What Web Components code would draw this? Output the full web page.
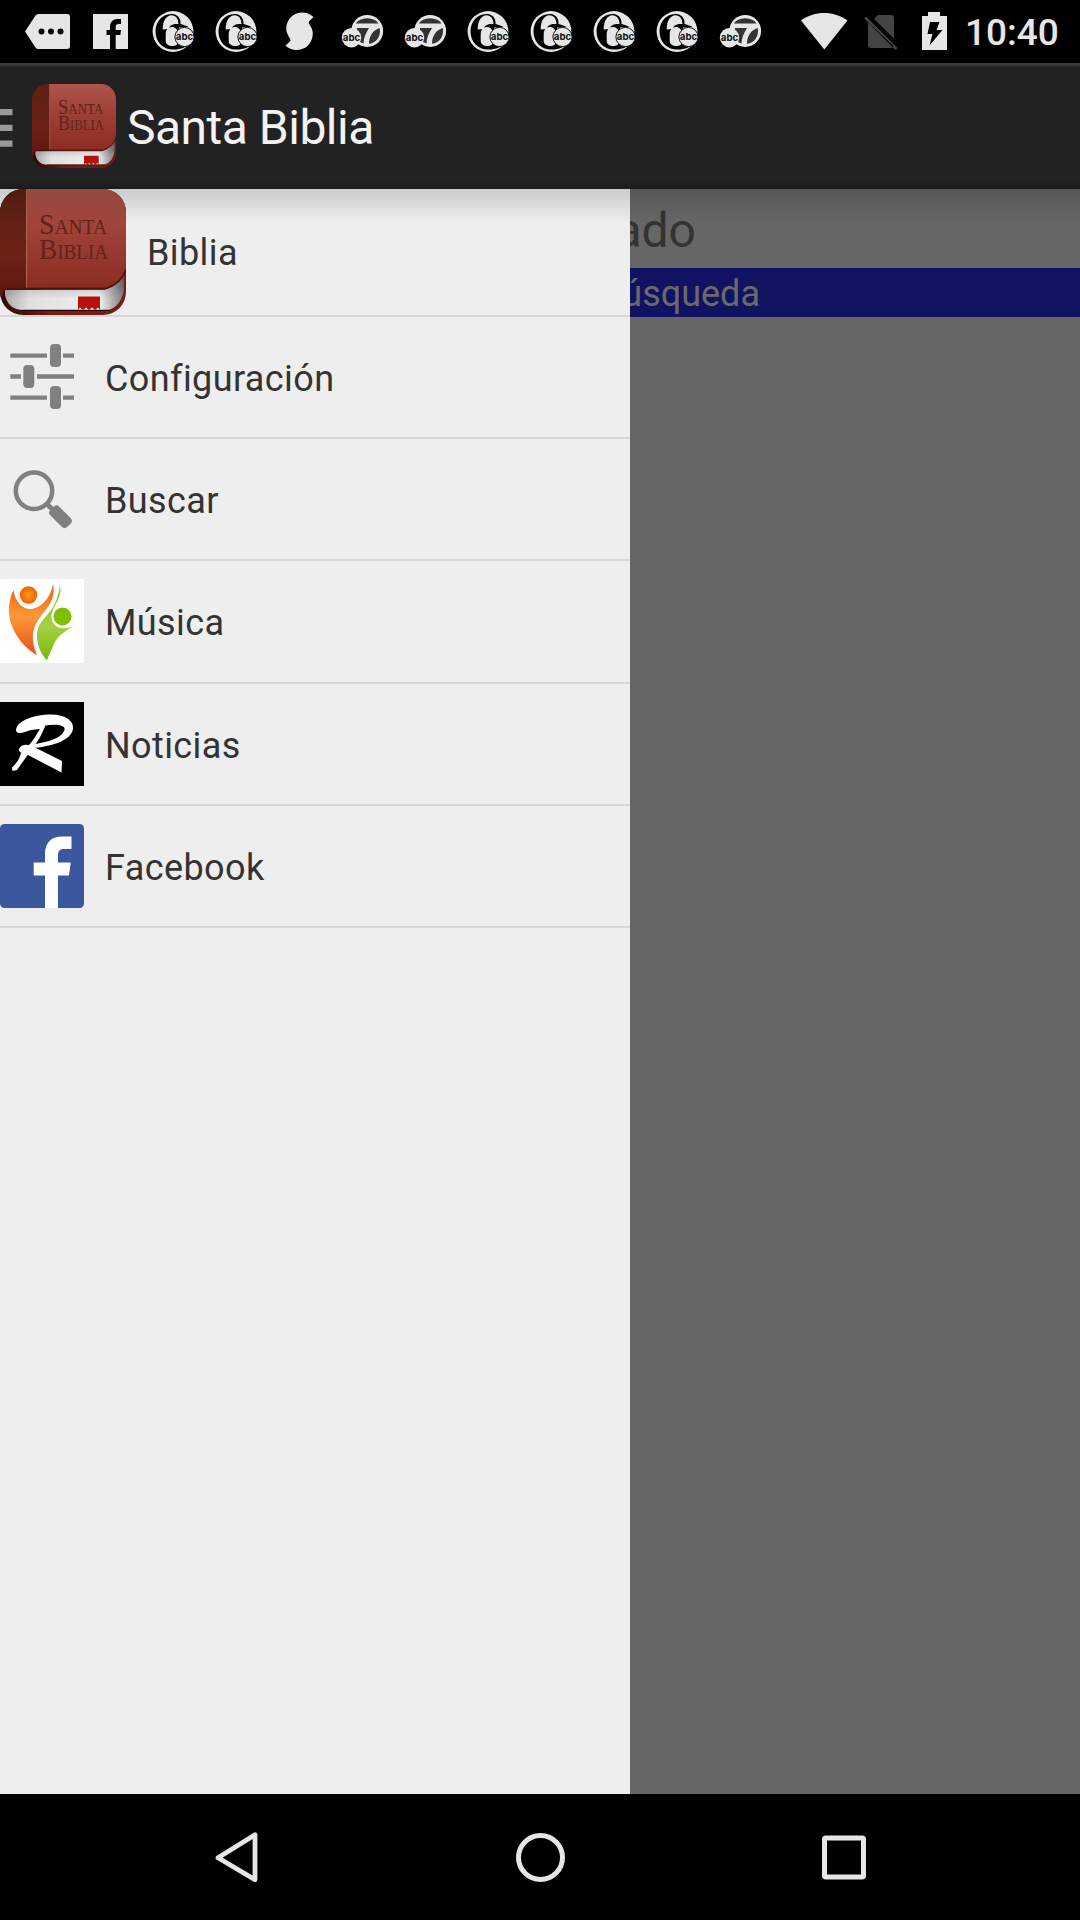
<!DOCTYPE html>
<html lang="es">
<head>
<meta charset="utf-8">
<title>Santa Biblia</title>
<style>
html,body{margin:0;width:1080px;height:1920px;overflow:hidden;background:#000;font-family:Roboto,"Noto Sans",sans-serif}
</style>
</head>
<body>
<bible-app></bible-app>
<script>
const define = (name, css, html) => customElements.define(name, class extends HTMLElement {
  constructor() {
    super();
    this.attachShadow({mode: 'open'}).innerHTML = `<style>${css}</style>${typeof html === 'function' ? html(this) : html}`;
  }
});

const ICONS = {
  message: [63, 63, `<path fill="#e6e6e6" d="M9 31.5 19.500 15.500Q20.500 14 22.500 14H51Q54 14 54 17V46Q54 49 51 49H22.500Q20.500 49 19.500 47.500Z"/><g fill="#000"><circle cx="25.500" cy="31.500" r="3"/><circle cx="35" cy="31.500" r="3"/><circle cx="44.500" cy="31.500" r="3"/></g>`],
  fbsmall: [63, 63, `<path fill="#e6e6e6" d="M14 14H49V49H14Z"/><path fill="#000" d="M31 49V35H27.500V30H31V27C31 22 34 19 38.500 19H42V24H39.500C37.500 24 36.700 25 36.700 27V30H42L41.300 35H36.700V49Z"/>`],
  six: [63, 63, `<circle cx="31" cy="31.500" r="20.400" fill="#e6e6e6"/><path fill="#000" d="M31 14C20 13 13.500 22 13.500 31.500C13.500 42 21 49.500 31 49.500C40 49.500 44 47 46 44L38 43L37 27.500L46.500 27C44 25.500 41 24.500 38.500 24C39 20 37 15 31 14Z"/><path fill="#e6e6e6" d="M20.700 29.500C20.700 21 24 15.500 29.500 15.200C34 15.200 36.500 19 36.500 24C31 23.500 27.500 25.500 26.500 29Z"/><path fill="#e6e6e6" d="M23.700 34C23.700 29.500 26.500 26.500 30.500 27C34 27.500 36 30 36 34V42C36 47.500 23.700 47.500 23.700 41Z"/><circle cx="42.500" cy="37" r="9.600" fill="#e6e6e6" stroke="#111" stroke-width="1"/><text x="33.800" y="40.300" textLength="17.400" lengthAdjust="spacingAndGlyphs" font-family="Inter,sans-serif" font-weight="700" font-size="9.500" fill="#111">abc</text>`],
  swirl: [63, 63, `<path fill="#e6e6e6" d="M45.500 17C39 11.500 31 11.500 25.500 15C18 20 17 29 19.500 34C21 38 23 39 22.500 41L17.500 45.500C23 51.500 33 51 39 46.500C45 41 46 33 43.500 28C42 24.500 40 23.500 41 21.500Z"/>`],
  seven: [63, 63, `<circle cx="36.200" cy="31" r="15.900" fill="#e6e6e6"/><path fill="#333" d="M24.800 23.500Q28 18.500 36.200 18.300Q44.500 18.500 47.500 23.500ZM26 28H38C35 33 32.500 38 32.500 43.500L29 42Q25 36 26 28ZM48.800 28C42 30 38 36 38 43.800C46 43 50 36 48.800 28Z"/><circle cx="20.500" cy="37.700" r="9.700" fill="#e6e6e6"/><text x="11.800" y="41" textLength="17.400" lengthAdjust="spacingAndGlyphs" font-family="Inter,sans-serif" font-weight="700" font-size="9.500" fill="#111">abc</text>`],
  wifi: [48, 63, `<path fill="#e6e6e6" d="M1 20.500C14 10.500 34 10.500 47.500 20.500L24.300 49.500Z"/>`],
  nosim: [36, 63, `<path fill="#444" d="M11 19 15 15H28Q31 15 31 18V38.500ZM5 22V45Q5 48 8 48H28Q30 48 30.500 46ZM1.200 18.500 3 16.500 34.500 48 32.500 50Z"/>`],
  battery: [26, 63, `<path fill="#e6e6e6" d="M0 16H6V12H18V16H25V50H0Z"/><path fill="#000" d="M8 22H17.500L14.500 30H20.500L7.500 45.500 10.500 34H5.500Z"/>`],
  menu: [13, 38, `<path fill="#999" d="M0 0H12.500V6.300H0ZM0 15.800H12.500V22.100H0ZM0 31.500H12.500V37.800H0Z"/>`],
  book: [126, 126, `<defs><linearGradient id="c" x1="0" y1="0" x2="0" y2="1"><stop offset="0" stop-color="#ae564c"/><stop offset=".3" stop-color="#a2463b"/><stop offset="1" stop-color="#8c2c22"/></linearGradient><linearGradient id="s" x1="0" y1="0" x2="0" y2="1"><stop offset="0" stop-color="#5c2015"/><stop offset=".6" stop-color="#6e2114"/><stop offset="1" stop-color="#5c170e"/></linearGradient><linearGradient id="p"><stop offset="0" stop-color="#aaa"/><stop offset=".2" stop-color="#e0e0e0"/><stop offset=".8" stop-color="#efefef"/><stop offset="1" stop-color="#777"/></linearGradient><linearGradient id="b"><stop offset="0" stop-color="#2b0805"/><stop offset=".4" stop-color="#7c1a12"/><stop offset="1" stop-color="#751c14"/></linearGradient><linearGradient id="h" x1="0" y1="0" x2="0" y2="1"><stop offset="0" stop-color="#000" stop-opacity=".3"/><stop offset="1" stop-color="#000" stop-opacity="0"/></linearGradient><clipPath id="k"><rect width="126" height="126" rx="23"/></clipPath></defs>
  <g clip-path="url(#k)"><path fill="url(#b)" d="M0 0H126V126H0Z"/><path fill="url(#p)" d="M5 101H105Q118 97 124 84V100Q122 116 109 121H22Q8 120 5 106Z"/><path fill="url(#h)" d="M5 101H105Q118 97 124 84V100Q118 108 108 110H6Z"/><path d="M22 121.300H110" stroke="#210806" stroke-width="1.200"/><path fill="url(#c)" d="M26 0H126V80Q122 94 107 99H26Z"/><path fill="url(#s)" d="M0 0H26V99H7Q2 101 2 110H0Z"/><path stroke="#b16455" stroke-width="1" d="M26.500 0V99"/><path d="M5 100Q8 99 107 99Q122 94 126 80" fill="none" stroke="#4a130d" stroke-width="1.500"/><path fill="#b5120c" d="M78 107.500H100V121L98 118.500 95 121 92 118.500 89 121 86 118.500 83 121 80 118.500 78 121Z"/></g>
  <g font-family="Liberation Serif,serif" fill="#63211a"><text x="39" y="45" font-size="30" textLength="68" lengthAdjust="spacingAndGlyphs" font-variant="small-caps">Santa</text><text x="39" y="69.500" font-size="30" textLength="69" lengthAdjust="spacingAndGlyphs" font-variant="small-caps">Biblia</text></g>`],
  sliders: [84, 84, `<path stroke="#808080" stroke-width="4.300" d="M10.300 20.600H47M63 20.600H74M10.300 41.500H21M37 41.500H74M10.300 62.700H47M63 62.700H74"/><g fill="#808080"><rect x="50" y="9" width="11" height="23" rx="4"/><rect x="23.300" y="30" width="11" height="23" rx="4"/><rect x="50" y="51" width="11" height="23" rx="4"/></g>`],
  search: [84, 84, `<circle cx="34" cy="33.700" r="18.200" fill="none" stroke="#808080" stroke-width="4.500"/><path stroke="#808080" stroke-width="5" d="M46.500 46.500 54 54"/><rect x="48.500" y="53.500" width="24" height="12.500" rx="4" transform="rotate(45 60.500 59.750)" fill="#808080"/>`],
  music: [84, 84, `<defs><radialGradient id="o"><stop offset="0" stop-color="#ff9c1a"/><stop offset="1" stop-color="#f2600a"/></radialGradient><linearGradient id="q" x1="0" y1="0" x2="0" y2="1"><stop offset="0" stop-color="#ee5a10"/><stop offset=".45" stop-color="#fb9a35"/><stop offset="1" stop-color="#e8501a"/></linearGradient><linearGradient id="g" x1="0" y1="0" x2="0" y2="1"><stop offset="0" stop-color="#84c010"/><stop offset=".55" stop-color="#a5d046"/><stop offset="1" stop-color="#78b90a"/></linearGradient></defs><path fill="#fff" d="M0 0H84V84H0Z"/><circle cx="28.500" cy="16" r="8.700" fill="url(#o)"/><path fill="url(#q)" d="M13.500 11C15 22 22 31 32 30C43 28 51 17 53 5C56 20 48 28 41 37C32 48 30 60 37 76C22 68 10 50 9 34C8.500 24 11 16 13.500 11Z"/><circle cx="62.500" cy="37.500" r="9" fill="#7cc000"/><path fill="url(#g)" d="M59.500 6C64 18 51 28 51.500 38C52 50 65 52 75 46C66 52 58 56 54 65C51 72 49 76 47 81.500C38 72 35 58 38 49C41 41 51 34 56 22C58 16 60 11 59.500 6Z"/>`],
  news: [84, 84, `<path d="M0 0H84V84H0Z"/><g fill="#fff"><path d="M16 28C17 18 36 12.500 51 12.500C66 12.500 74 19 73 27C71 39 50 45 31 46L32 42.500C49 40 62 36 64.500 28C66 22 54 22 45 23.500C35 25 26 31 20 31C17 31 16 30 16 28Z"/><path d="M40 23 46 22C42 32 39 38 34 44L17 68 12.500 69 12 65.500C18 60 20 55 21 51L29 43C34 38 37 31 40 27L27 28.500Z"/><path d="M19 47C22 41 29 42 36 46L62 59 61.500 70.500 51 65 26 52Q18 51 19 47Z"/></g>`],
  facebook: [84, 84, `<rect width="84" height="84" rx="4.500" fill="#3b579d"/><path fill="#fff" d="M45 84V51.500H33.700V38.500H45V30C45 18 52 12.500 62 12.500H71.500V25H64C60 25 58 27 58 30.500V38.500H70.700L69 51.500H58V84Z"/>`],
  back: [50, 56, `<path d="M6 28.500 43 5.500V50.500Z" transform="translate(1 .3)" fill="none" stroke="#e6e6e6" stroke-width="4.800" stroke-linejoin="round"/>`],
  home: [50, 56, `<circle cx="25.500" cy="28.500" r="22" fill="none" stroke="#e6e6e6" stroke-width="5"/>`],
  recent: [50, 56, `<rect x="5.500" y="9" width="39" height="39" rx="1.500" fill="none" stroke="#e6e6e6" stroke-width="5"/>`]
};

define('app-icon', `:host{display:block;flex:none}svg{display:block}`, el => {
  const [w, h, body] = ICONS[el.getAttribute('name')];
  const s = el.getAttribute('size');
  return `<svg width="${s || w}" height="${s || h}" viewBox="0 0 ${w} ${h}">${body}</svg>`;
});

define('status-bar', `:host{display:flex;height:63px;box-sizing:border-box;padding:0 22px 0 16px;background:#000;align-items:center;overflow:hidden}
.notes{display:flex;flex:1}.sys{display:flex;align-items:center}
.sys app-icon:nth-child(2){margin-left:15px}.sys app-icon:nth-child(3){margin-left:23px}
time{font-size:37px;line-height:44px;font-weight:500;color:#e6e6e6;margin-left:17px;padding-top:3px;width:93px;white-space:nowrap}`,
`<div class="notes">${['message','fbsmall','six','six','swirl','seven','seven','six','six','six','six','seven'].map(n => `<app-icon name="${n}"></app-icon>`).join('')}</div>
<div class="sys"><app-icon name="wifi"></app-icon><app-icon name="nosim"></app-icon><app-icon name="battery"></app-icon><time>10:40</time></div>`);

define('action-bar', `:host{display:flex;height:126px;box-sizing:border-box;align-items:center;background:linear-gradient(#3c3c3c 0 2px,#2a2a2a 3px,#222 5px 117px,#1b1b1b 126px)}
app-icon:nth-of-type(1){margin:4px 19px 0 0}
h1{margin:0 0 0 11px;font-weight:400;font-size:48px;letter-spacing:-.5px;line-height:56px;color:#f3f3f3;padding-top:4px}`,
`<app-icon name="menu"></app-icon><app-icon name="book" size="84"></app-icon><h1><slot></slot></h1>`);

define('drawer-item', `:host{display:flex;align-items:center;height:120.2px;border-bottom:2px solid #d7d7d7}
:host([large]){height:126px}
span{margin-left:21px;font-size:36px;letter-spacing:.4px;line-height:42px;color:#333;padding-top:4px}
:host([large]) span{padding-top:2px}`,
el => `<app-icon name="${el.getAttribute('icon')}"></app-icon><span><slot></slot></span>`);

define('nav-drawer', `:host{display:block;width:630px;background:#eee}`, `<slot></slot>`);

define('search-results', `:host{display:block;background:#666;text-align:right}
.title{height:79px;line-height:83px;font-size:48px;color:#333;padding-right:384px}
.banner{height:49px;line-height:53px;font-size:36px;color:#6a6a6a;background:#121263;padding-right:320px}`,
`<div class="title">ado</div><div class="banner">úsqueda</div>`);

define('nav-bar', `:host{display:flex;height:126px;background:#000;justify-content:center;align-items:center}
div{width:304px;display:flex;justify-content:center}`,
`<div><app-icon name="back"></app-icon></div><div><app-icon name="home"></app-icon></div><div><app-icon name="recent"></app-icon></div>`);

define('bible-app', `:host{display:flex;flex-direction:column;width:1080px;height:1920px;overflow:hidden}
main{flex:1;display:grid;position:relative}
search-results,nav-drawer{grid-area:1/1}
main::after{content:"";position:absolute;inset:0 0 auto;height:34px;background:linear-gradient(rgba(0,0,0,.15),rgba(0,0,0,0))}`,
`<status-bar></status-bar><action-bar>Santa Biblia</action-bar>
<main><search-results></search-results>
<nav-drawer><drawer-item icon="book" large>Biblia</drawer-item><drawer-item icon="sliders">Configuración</drawer-item><drawer-item icon="search">Buscar</drawer-item><drawer-item icon="music">Música</drawer-item><drawer-item icon="news">Noticias</drawer-item><drawer-item icon="facebook">Facebook</drawer-item></nav-drawer></main>
<nav-bar></nav-bar>`);
</script>
</body>
</html>
